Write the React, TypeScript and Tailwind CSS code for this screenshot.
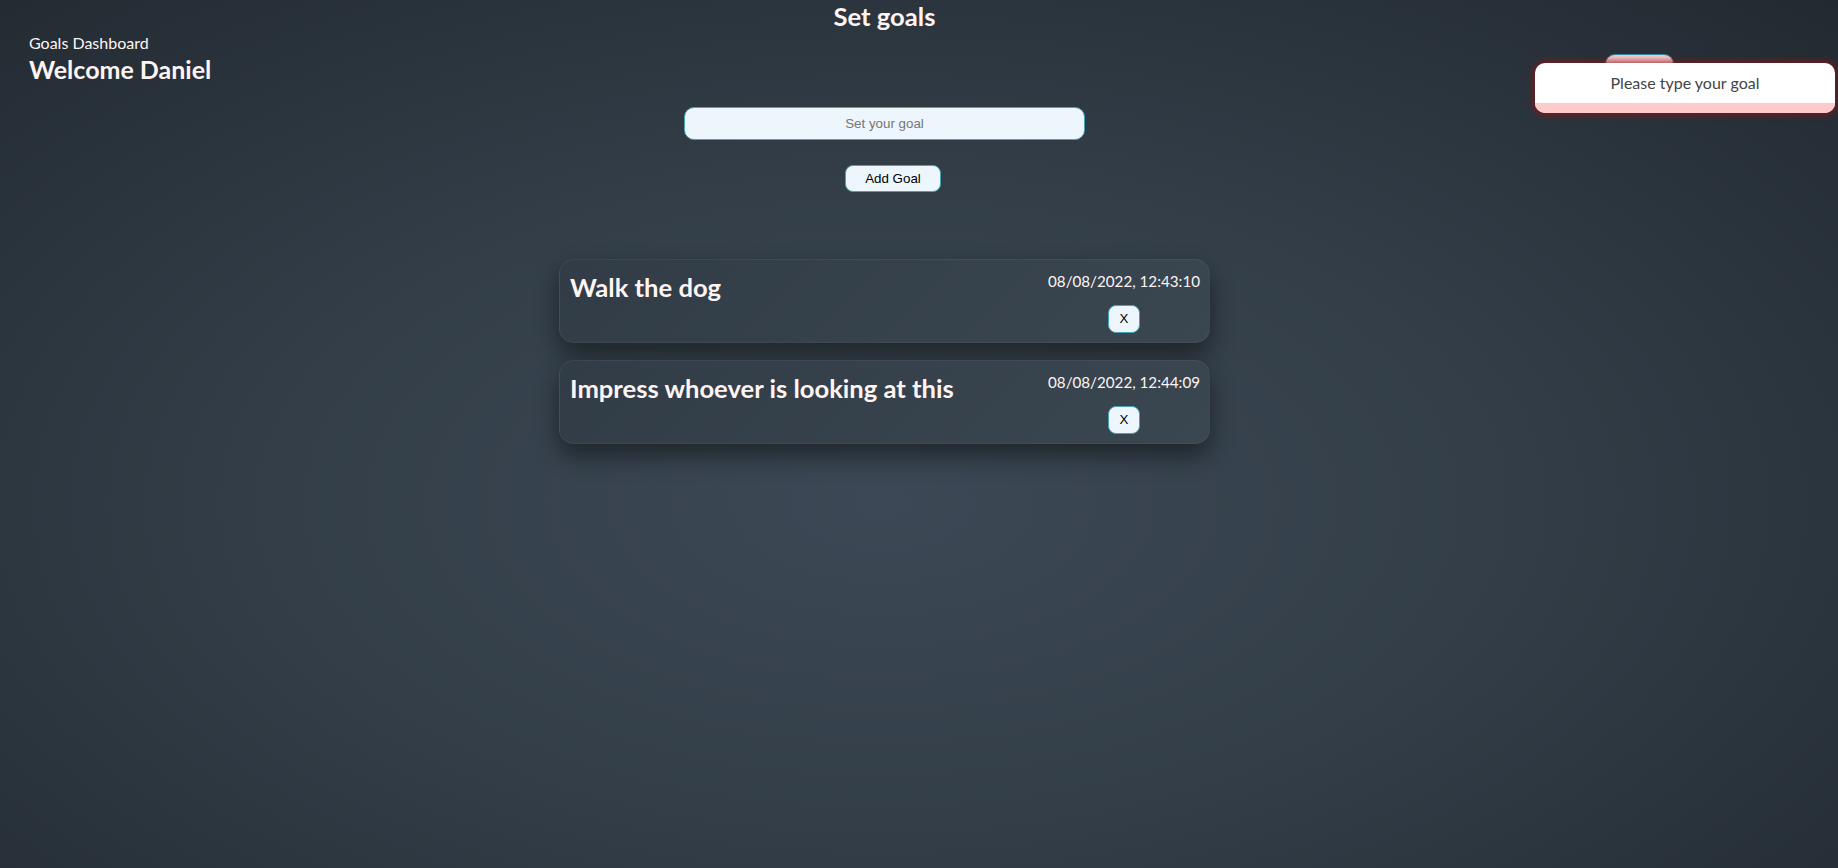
import React from "react";

const goals = [
  { text: "Walk the dog", date: "08/08/2022, 12:43:10" },
  { text: "Impress whoever is looking at this", date: "08/08/2022, 12:44:09" },
];

export default function App() {
  return (
    <div
      className="relative w-full h-[868px] overflow-hidden text-[#fff4f4] font-['Lato','Noto_Sans',sans-serif] bg-[radial-gradient(ellipse_at_48%_58%,#3c4855_0%,#333e48_45%,#222a31_100%)]"
    >
      <div className="w-[1769px]">
        {/* header */}
        <div className="grid grid-cols-[1fr_auto_1fr]">
          <div className="pl-[29px] pt-[33px]">
            <div className="text-[16px] leading-[20px]">Goals Dashboard</div>
            <div className="text-[25px] leading-[28px] font-bold mt-[2px]">Welcome Daniel</div>
          </div>
          <h1 className="text-[25.6px] leading-[28px] font-bold mt-[2px]">Set goals</h1>
          <div className="flex justify-end pr-[95px] pt-[54px]">
            <button className="w-[69px] h-[30px] rounded-[10px] border border-[#2f8ea2] bg-[linear-gradient(#f6cdd2,#eeb4bb)] text-[13.3333px] text-black font-['Liberation_Sans',Arial,sans-serif]">
              Logout
            </button>
          </div>
        </div>

        {/* form */}
        <div className="flex flex-col items-center mt-[23px]">
          <input
            placeholder="Set your goal"
            className="w-[401px] h-[33px] rounded-[10px] border border-[#47a3b8] bg-[#eef6fd] text-center text-[13.3333px] placeholder:text-[#757575] font-['Liberation_Sans',Arial,sans-serif] outline-none"
          />
          <button className="mt-[25px] ml-[17px] w-[96px] h-[27px] rounded-[8px] border border-[#47a3b8] bg-[#eef6fd] text-black text-[13.3333px] font-['Liberation_Sans',Arial,sans-serif]">
            Add Goal
          </button>
        </div>

        {/* goals */}
        <div className="flex flex-col items-center mt-[67px] gap-[17px]">
          {goals.map((g) => (
            <div
              key={g.date}
              className="w-[651px] h-[84px] rounded-[15px] border border-white/5 bg-[linear-gradient(135deg,#313c46,#3a4650)] shadow-[0_12px_24px_rgba(0,0,0,0.45)] flex justify-between pl-[10px] pr-[9px] pt-[11px]"
            >
              <h2 className="text-[25.6px] leading-[28px] font-bold mt-[2px]">{g.text}</h2>
              <div className="flex flex-col items-center">
                <div className="text-[15.2px] leading-[20px]">{g.date}</div>
                <button className="mt-[14px] w-[32px] h-[28px] rounded-[8px] border border-[#47a3b8] bg-[#eef6fd] text-black text-[13.3333px] font-['Liberation_Sans',Arial,sans-serif]">
                  X
                </button>
              </div>
            </div>
          ))}
        </div>
      </div>

      {/* toast */}
      <div className="absolute top-[63px] right-[3px] w-[300px] h-[50px] rounded-[10px] overflow-hidden bg-white shadow-[0_0_6px_2px_rgba(140,20,20,0.75)] flex flex-col">
        <div className="flex-1 flex items-center justify-center text-[16px] text-[#444]">
          Please type your goal
        </div>
        <div className="h-[10px] bg-[#ffcaca]" />
      </div>
    </div>
  );
}
